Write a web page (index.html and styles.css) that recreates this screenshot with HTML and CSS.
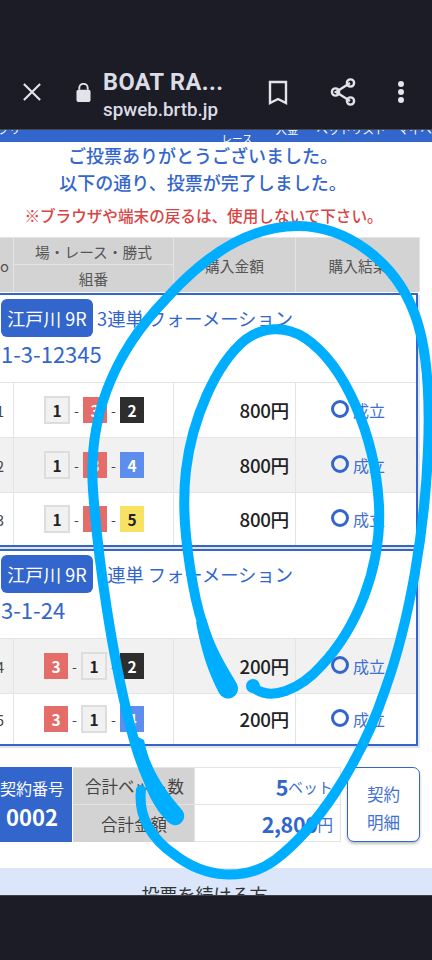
FILE: index.html
```html
<!DOCTYPE html>
<html lang="ja">
<head>
<meta charset="utf-8">
<title>BOAT RACE</title>
<link rel="stylesheet" href="styles.css">
</head>
<body>
<div class="screen">
  <header class="topbar">
    <svg class="ico-close" viewBox="0 0 20 20"><path d="M1 1L19 19M19 1L1 19"/></svg>
    <svg class="ico-lock" viewBox="0 0 16 20"><path d="M3.5 7V5.2a4.5 4.5 0 0 1 9 0V7" class="shackle"/><rect x="0.5" y="7" width="15" height="13" rx="2"/></svg>
    <div class="site">
      <div class="site-title">BOAT RA...</div>
      <div class="site-url">spweb.brtb.jp</div>
    </div>
    <svg class="ico-mark" viewBox="0 0 20 25"><path d="M2 2H18V23L10 19L2 23Z"/></svg>
    <svg class="ico-share" viewBox="0 0 26 28"><path d="M20 5L6 14L20 23"/><circle cx="20.5" cy="5" r="3.6"/><circle cx="5.5" cy="14" r="3.6"/><circle cx="20.5" cy="23" r="3.6"/></svg>
    <div class="dots"><i></i><i></i><i></i></div>
  </header>
  <nav class="nav">
    <span class="n1">アプリ</span><span class="n2">レース</span><span class="n3">入金</span><span class="n4">ベットリスト</span><span class="n5">マイページ</span>
  </nav>
  <main class="main">
    <p class="thanks">ご投票ありがとうございました。<br>以下の通り、投票が完了しました。</p>
    <p class="warn">※ブラウザや端末の戻るは、使用しないで下さい。</p>
    <div class="tbl">
      <div class="thead">
        <div class="th h-no">No</div>
        <div class="th h-a">場・レース・勝式</div>
        <div class="th h-p">購入金額</div>
        <div class="th h-r">購入結果</div>
        <div class="th h-b">組番</div>
      </div>
      <section class="group">
        <div class="ghead">
          <div class="gline"><span class="badge">江戸川 9R</span><span class="gtype">3連単 フォーメーション</span></div>
          <div class="gcombo">1-3-12345</div>
        </div>
        <div class="row">
          <div class="c no">1</div>
          <div class="c combo"><b class="n w">1</b><s>-</s><b class="n r">3</b><s>-</s><b class="n k">2</b></div>
          <div class="c price">800円</div>
          <div class="c res"><i class="ring"></i>成立</div>
        </div>
        <div class="row alt">
          <div class="c no">2</div>
          <div class="c combo"><b class="n w">1</b><s>-</s><b class="n r">3</b><s>-</s><b class="n u">4</b></div>
          <div class="c price">800円</div>
          <div class="c res"><i class="ring"></i>成立</div>
        </div>
        <div class="row">
          <div class="c no">3</div>
          <div class="c combo"><b class="n w">1</b><s>-</s><b class="n r">3</b><s>-</s><b class="n y">5</b></div>
          <div class="c price">800円</div>
          <div class="c res"><i class="ring"></i>成立</div>
        </div>
      </section>
      <section class="group second">
        <div class="ghead">
          <div class="gline"><span class="badge">江戸川 9R</span><span class="gtype">3連単 フォーメーション</span></div>
          <div class="gcombo">3-1-24</div>
        </div>
        <div class="row alt">
          <div class="c no">4</div>
          <div class="c combo"><b class="n r">3</b><s>-</s><b class="n w">1</b><s>-</s><b class="n k">2</b></div>
          <div class="c price">200円</div>
          <div class="c res"><i class="ring"></i>成立</div>
        </div>
        <div class="row">
          <div class="c no">5</div>
          <div class="c combo"><b class="n r">3</b><s>-</s><b class="n w">1</b><s>-</s><b class="n u">4</b></div>
          <div class="c price">200円</div>
          <div class="c res"><i class="ring"></i>成立</div>
        </div>
      </section>
    </div>
    <div class="summary">
      <div class="contract"><span>契約番号</span><strong>0002</strong></div>
      <div class="totals">
        <div class="tl l1">合計ベット数</div>
        <div class="tv"><strong>5</strong>ベット</div>
        <div class="tl l2">合計金額</div>
        <div class="tv"><strong>2,800</strong>円</div>
      </div>
      <button class="detail">契約<br>明細</button>
    </div>
    <div class="cont"><span>投票を続ける方</span></div>
  </main>
  <footer class="bottombar"></footer>
  <svg class="scribble" viewBox="0 0 432 960" aria-hidden="true">
    <path class="st" d="M228 688C214 658 200 625 193 585C185 540 182 505 186 470C192 420 215 365 245 340C262 327 285 325 305 338C345 365 375 435 379 505C382 570 355 630 322 665C300 690 270 702 253 687"/>
    <path class="st" d="M173 816C152 795 140 765 130 725C112 655 98 560 93 490C88 420 112 355 165 300C205 255 250 226 298 226C345 226 395 260 415 315C428 350 430 400 428 450C425 530 410 620 385 690C360 765 315 830 275 860C245 882 205 878 175 855C150 838 138 815 141 790"/>
    <path class="tip" d="M196 622L206 618C214 648 228 668 237 684A9.5 9.5 0 0 1 219 693C208 672 201 650 196 622Z"/>
    <path class="tip" d="M134 735L144 740C150 770 165 790 182 810A9 9 0 0 1 168 822C150 805 138 775 134 735Z"/>
    <circle class="tip" cx="253" cy="686" r="7"/>
  </svg>
</div>
</body>
</html>
```
FILE: styles.css
```css
* { box-sizing: border-box; }
html, body { margin: 0; padding: 0; }
body { font-family: "Noto Sans CJK JP", "Noto Sans", sans-serif; background: #fff; }
.screen { position: relative; width: 432px; height: 960px; overflow: hidden; display: flex; flex-direction: column; }

.topbar { height: 130px; flex: none; background: #1b1c26; display: flex; align-items: flex-start; padding-top: 70px; color: #dcdce5; border-bottom: 1px solid #45464e; }
.ico-close { width: 18px; height: 18px; margin: 13px 0 0 23px; flex: none; }
.ico-close path { stroke: #e3e3ea; stroke-width: 2.4; fill: none; }
.ico-lock { width: 15px; height: 19px; margin: 13px 0 0 35px; flex: none; fill: #e3e3ea; }
.ico-lock .shackle { fill: none; stroke: #e3e3ea; stroke-width: 2; }
.site { margin-left: 12px; width: 151px; flex: none; font-family: Roboto, sans-serif; font-weight: 500; padding-top: 1px; }
.site-title { font-size: 23.5px; line-height: 22px; font-weight: 700; letter-spacing: 0.4px; white-space: nowrap; }
.site-url { font-size: 18.8px; line-height: 24px; margin-top: 5px; }
.ico-mark { width: 20px; height: 25px; margin: 10px 0 0 14px; flex: none; fill: none; stroke: #e3e3ea; stroke-width: 2.4; }
.ico-share { width: 26px; height: 28px; margin: 8px 0 0 42px; flex: none; fill: none; stroke: #e3e3ea; stroke-width: 2.4; }
.dots { margin: 11px 0 0 42px; display: flex; flex-direction: column; gap: 2px; }
.dots i { width: 6px; height: 6px; border-radius: 50%; background: #e3e3ea; display: block; }

.nav { height: 12px; flex: none; background: #3366cc; color: #fff; font-size: 11.5px; line-height: 14px; display: flex; overflow: hidden; position: relative; white-space: nowrap; }
.nav span { display: block; margin-top: -8px; }
.n1 { margin-left: -14px; }
.nav .n2 { margin: 2px 0 0 201px; font-size: 10.5px; }
.n3 { margin-left: 23px; }
.n4 { margin-left: 18px; }
.n5 { margin-left: 12px; }

.main { flex: 1; min-height: 0; overflow: hidden; }
.thanks { margin: 0; text-align: center; width: 406px; font-size: 18px; line-height: 27px; font-weight: 500; color: #3366cc; }
.warn { margin: 8px 0 0; text-align: center; width: 407px; font-size: 15.6px; line-height: 22px; font-weight: 500; color: #d94444; }

.tbl { margin: 11px 0 0 -17px; width: 437px; }
.thead { display: grid; grid-template-columns: 31px 160px 122px 124px; grid-template-rows: 27px 27px; background: #d3d3d3; color: #555; font-size: 14.7px; border-top: 1px solid #e4e4e4; border-right: 1px solid #e4e4e4; }
.th { display: flex; align-items: center; justify-content: center; border-right: 1px solid #e4e4e4; }
.h-no { grid-row: 1 / 3; justify-content: flex-end; padding-right: 4px; }
.h-a { border-bottom: 1px solid #e4e4e4; }
.h-p { grid-row: 1 / 3; grid-column: 3; }
.h-r { grid-row: 1 / 3; grid-column: 4; border-right: 0; }
.h-b { grid-row: 2; grid-column: 2; }

.group { width: 435px; border: 2px solid #3366cc; border-left: 0; margin-top: 1px; box-shadow: 2px 2px 0 #e4e4e4; background: #fff; }
.second { margin-top: 2px; }
.ghead { height: 88px; padding: 4px 0 0 18px; border-bottom: 1px solid #e4e4e4; color: #3366cc; }
.gline { display: flex; align-items: center; gap: 4px; height: 38px; }
.badge { width: 92px; height: 38px; background: #3366cc; color: #fff; border-radius: 6px; font-size: 18px; display: flex; align-items: center; justify-content: center; white-space: nowrap; }
.gtype { font-size: 18.3px; white-space: nowrap; }
.gcombo { font-size: 22px; line-height: 30px; margin-top: 1px; }

.row { display: grid; grid-template-columns: 31px 160px 122px 120px; height: 55px; border-bottom: 1px solid #e4e4e4; background: #fff; }
.row:last-child { border-bottom: 0; height: 52px; }
.second .row:last-child { height: 50px; }
.alt { background: #f1f1f1; }
.c { display: flex; align-items: center; border-right: 1px solid #e4e4e4; }
.c:last-child { border-right: 0; }
.no { justify-content: flex-end; font-size: 14.5px; color: #444; padding-right: 9px; }
.combo { padding-left: 30px; }
.combo s { text-decoration: none; font-size: 14px; color: #444; width: 13px; text-align: center; }
.n { font-size: 15.5px; font-weight: 700; display: flex; align-items: center; justify-content: center; color: #fff; width: 24px; height: 26px; }
.n.w { width: 26px; height: 28px; background: #f1f1f1; border: 2px solid #ddd; color: #222; }
.n.r { background: #e46d69; }
.n.k { background: #2e2e2e; }
.n.u { background: #5d8eee; }
.n.y { background: #f7e264; color: #222; }
.price { justify-content: flex-end; padding: 0 6px 2px 0; font-size: 18.7px; font-weight: 500; color: #222; letter-spacing: -0.3px; }
.res { padding-left: 35px; color: #3f70d2; font-size: 16px; white-space: nowrap; }
.ring { width: 18px; height: 18px; border: 3px solid #3366cc; border-radius: 50%; margin-right: 4px; margin-top: -2px; flex: none; }

.summary { display: flex; margin: 21px 0 0 -8px; height: 75px; }
.contract { width: 80px; flex: none; background: #3366cc; color: #fff; display: flex; flex-direction: column; align-items: center; padding-top: 9px; font-size: 16px; line-height: 24px; white-space: nowrap; }
.contract strong { font-size: 22px; line-height: 32px; font-weight: 700; }
.totals { width: 268px; flex: none; margin-left: 1px; display: grid; grid-template-columns: 121px 146px; grid-template-rows: 37px 37px; border: 1px solid #e4e4e4; border-left: 0; }
.tl { background: #d3d3d3; color: #444; font-size: 16.5px; display: flex; align-items: center; justify-content: flex-end; border-bottom: 1px solid #e4e4e4; white-space: nowrap; }
.l1 { padding-right: 10px; }
.l2 { padding-right: 27px; border-bottom: 0; }
.tv { border-left: 1px solid #e4e4e4; border-bottom: 1px solid #e4e4e4; display: flex; align-items: center; justify-content: flex-end; padding-right: 7px; color: #3f70d2; font-size: 15px; }
.tv:last-child { border-bottom: 0; font-size: 15.5px; }
.tv strong { font-size: 21.5px; font-weight: 700; color: #3366cc; letter-spacing: -0.4px; }
.detail { width: 73px; height: 75px; flex: none; margin-left: 6px; border: 1px solid #3366cc; border-radius: 7px; background: #fff; color: #3f70d2; font: 16.5px/28px "Noto Sans CJK JP", sans-serif; padding: 6px 0 0; box-shadow: 0 2px 3px rgba(0,0,0,.25); }
.cont { margin-top: 26px; height: 40px; background: #dbe6fb; text-align: center; font-size: 18px; line-height: 26px; padding-top: 13px; width: 432px; color: #333; padding-right: 23px; }

.bottombar { height: 65px; flex: none; background: #1b1c26; border-top: 1px solid #3c3d45; }
.scribble { position: absolute; left: 0; top: 0; width: 432px; height: 960px; pointer-events: none; }
.st { fill: none; stroke: #00aeff; stroke-width: 10; stroke-linecap: round; stroke-linejoin: round; }
.tip { fill: #00aeff; }
```
